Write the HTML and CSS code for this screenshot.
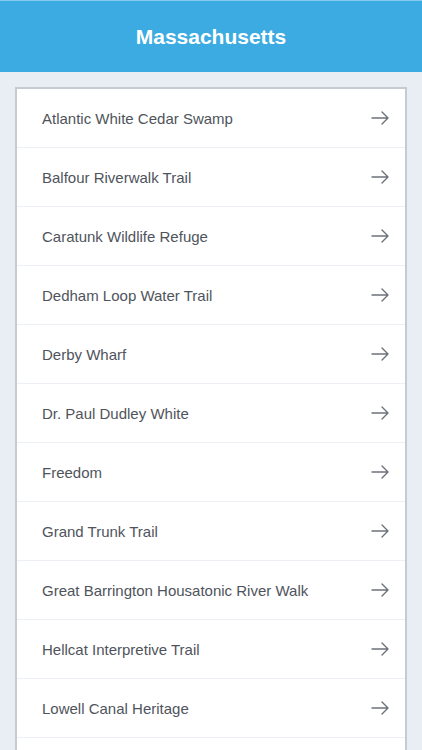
FILE: index.html
```html
<!DOCTYPE html>
<html lang="en">
<head>
    <meta charset="UTF-8">
    <meta name="viewport" content="width=device-width, initial-scale=1.0">
    <title>Massachusetts</title>
    <link rel="stylesheet" href="styles.css">
</head>
<body>
    <header class="topbar">
        <h1>Massachusetts</h1>
    </header>

    <main class="content">
        <ul class="trail-list">
            <li class="trail"><span>Atlantic White Cedar Swamp</span><svg class="arrow" viewBox="0 0 18 14"><path d="M1 7h16M11 1l6 6-6 6"/></svg></li>
            <li class="trail"><span>Balfour Riverwalk Trail</span><svg class="arrow" viewBox="0 0 18 14"><path d="M1 7h16M11 1l6 6-6 6"/></svg></li>
            <li class="trail"><span>Caratunk Wildlife Refuge</span><svg class="arrow" viewBox="0 0 18 14"><path d="M1 7h16M11 1l6 6-6 6"/></svg></li>
            <li class="trail"><span>Dedham Loop Water Trail</span><svg class="arrow" viewBox="0 0 18 14"><path d="M1 7h16M11 1l6 6-6 6"/></svg></li>
            <li class="trail"><span>Derby Wharf</span><svg class="arrow" viewBox="0 0 18 14"><path d="M1 7h16M11 1l6 6-6 6"/></svg></li>
            <li class="trail"><span>Dr. Paul Dudley White</span><svg class="arrow" viewBox="0 0 18 14"><path d="M1 7h16M11 1l6 6-6 6"/></svg></li>
            <li class="trail"><span>Freedom</span><svg class="arrow" viewBox="0 0 18 14"><path d="M1 7h16M11 1l6 6-6 6"/></svg></li>
            <li class="trail"><span>Grand Trunk Trail</span><svg class="arrow" viewBox="0 0 18 14"><path d="M1 7h16M11 1l6 6-6 6"/></svg></li>
            <li class="trail"><span>Great Barrington Housatonic River Walk</span><svg class="arrow" viewBox="0 0 18 14"><path d="M1 7h16M11 1l6 6-6 6"/></svg></li>
            <li class="trail"><span>Hellcat Interpretive Trail</span><svg class="arrow" viewBox="0 0 18 14"><path d="M1 7h16M11 1l6 6-6 6"/></svg></li>
            <li class="trail"><span>Lowell Canal Heritage</span><svg class="arrow" viewBox="0 0 18 14"><path d="M1 7h16M11 1l6 6-6 6"/></svg></li>
        </ul>
    </main>
</body>
</html>
```

FILE: styles.css
```css
body {
    margin: 0;
    background: #e9eef5;
    font-family: "Liberation Sans", Arial, sans-serif;
    overflow: hidden;
}
.topbar {
    height: 71px;
    background: #3babe2;
    border-top: 1px solid #86c9ee;
    display: flex;
    align-items: center;
    justify-content: center;
}
.topbar h1 {
    margin: 0;
    color: #fff;
    font-size: 21px;
    font-weight: bold;
}
.content {
    padding: 15px 15px 0 15px;
}
.trail-list {
    list-style: none;
    margin: 0;
    padding: 0;
    min-height: 700px;
    background: #fff;
    border: 2px solid #c6cad1;
    border-bottom: none;
}
.trail {
    height: 58px;
    display: flex;
    align-items: center;
    justify-content: space-between;
    padding: 0 16px 0 25px;
    border-bottom: 1px solid #eceff3;
    color: #4f545c;
    font-size: 15px;
}
.arrow {
    width: 18px;
    height: 14px;
    fill: none;
    stroke: #6d727a;
    stroke-width: 1.4;
    stroke-linecap: round;
    stroke-linejoin: round;
}
```
